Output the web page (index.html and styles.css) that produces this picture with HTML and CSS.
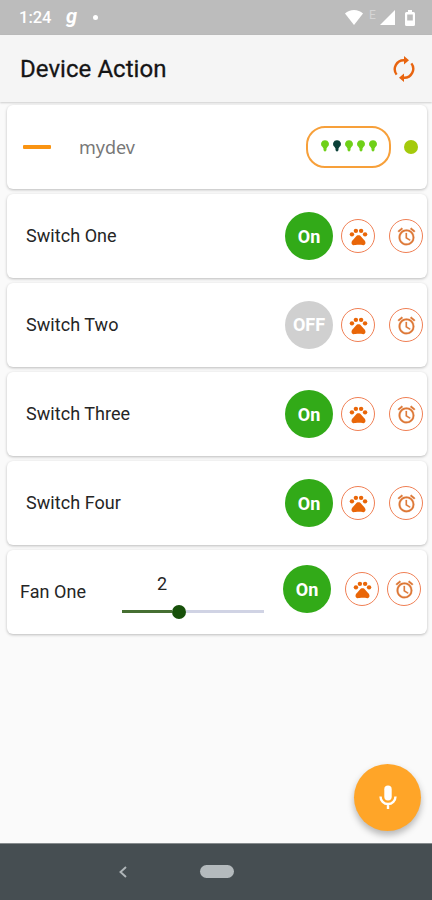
FILE: index.html
```html
<!DOCTYPE html>
<html lang="en">
<head>
<meta charset="utf-8">
<title>Device Action</title>
<link rel="stylesheet" href="styles.css">
</head>
<body>
<svg class="defs" aria-hidden="true">
  <symbol id="paw" viewBox="0 0 24 24">
    <circle cx="4.5" cy="9.5" r="2.5"/><circle cx="9" cy="5.5" r="2.5"/><circle cx="15" cy="5.5" r="2.5"/><circle cx="19.5" cy="9.5" r="2.5"/>
    <path d="M17.34 14.86c-.87-1.02-1.6-1.89-2.48-2.91-.46-.54-1.05-1.08-1.75-1.32-.72-.25-1.5-.25-2.22 0-.7.24-1.28.78-1.75 1.32-.87 1.02-1.6 1.89-2.48 2.91-1.31 1.31-2.92 2.76-2.62 4.79.29 1.02 1.02 2.03 2.33 2.32.73.15 3.06-.44 5.54-.44h.18c2.48 0 4.81.58 5.54.44 1.31-.29 2.04-1.31 2.33-2.32.31-2.04-1.3-3.49-2.62-4.79z"/>
  </symbol>
  <symbol id="alarm" viewBox="0 0 24 24">
    <path d="M22 5.72l-4.6-3.86-1.29 1.53 4.6 3.86L22 5.72zM7.88 3.39L6.6 1.86 2 5.71l1.29 1.53 4.59-3.85zM12.5 8H11v6l4.75 2.85.75-1.23-4-2.37V8zM12 4c-4.97 0-9 4.03-9 9s4.02 9 9 9a9 9 0 0 0 0-18zm0 16c-3.87 0-7-3.13-7-7s3.13-7 7-7 7 3.13 7 7-3.13 7-7 7z"/>
  </symbol>
  <symbol id="bulb" viewBox="0 0 8 12"><path d="M4 0.3a3.7 3.7 0 0 0-2.6 6.500L2.500 8.400v1.900L4 11.700l1.500-1.400V8.400l1.100-1.600A3.7 3.7 0 0 0 4 .3z"/></symbol>
</svg>
<header class="status">
  <span class="time">1:24</span><span class="g">g</span><span class="dot"></span>
  <svg class="wifi" viewBox="0 0 18 15"><path d="M9 15L0 3.6C2.4 1.3 5.5 0 9 0s6.600 1.300 9 3.600z"/></svg>
  <span class="edge">E</span>
  <svg class="signal" viewBox="0 0 15 15"><path d="M15 0v15H0z"/></svg>
  <svg class="battery" viewBox="0 0 10 16"><path d="M3 0h4v2h1.500Q10 2 10 3.500v11Q10 16 8.500 16h-7Q0 16 0 14.500v-11Q0 2 1.500 2H3z"/><path class="level" d="M2.200 4.500h5.600v6H2.200z"/></svg>
</header>
<div class="appbar">
  <h1>Device Action</h1>
  <svg class="refresh" viewBox="0 0 22 26"><g fill="none" stroke="currentColor" stroke-width="2.400"><path d="M3.600 18.600A9 9 0 0 1 11 4.200h2.500"/><path d="M18.400 7.400A9 9 0 0 1 11 21.800H8.500"/></g><path d="M11 0l5 4.300-5 4.200zM11 17.500l-5 4.200 5 4.300z"/></svg>
</div>
<main>
  <section class="card device">
    <span class="dash"></span><span class="name">mydev</span>
    <div class="bulbs"><svg><use href="#bulb"/></svg><svg class="dark"><use href="#bulb"/></svg><svg><use href="#bulb"/></svg><svg><use href="#bulb"/></svg><svg><use href="#bulb"/></svg></div>
    <span class="online"></span>
  </section>
  <section class="card"><span class="label">Switch One</span><span class="toggle">On</span><span class="ring paw"><svg><use href="#paw"/></svg></span><span class="ring alarm"><svg><use href="#alarm"/></svg></span></section>
  <section class="card"><span class="label">Switch Two</span><span class="toggle off">OFF</span><span class="ring paw"><svg><use href="#paw"/></svg></span><span class="ring alarm"><svg><use href="#alarm"/></svg></span></section>
  <section class="card"><span class="label">Switch Three</span><span class="toggle">On</span><span class="ring paw"><svg><use href="#paw"/></svg></span><span class="ring alarm"><svg><use href="#alarm"/></svg></span></section>
  <section class="card"><span class="label">Switch Four</span><span class="toggle">On</span><span class="ring paw"><svg><use href="#paw"/></svg></span><span class="ring alarm"><svg><use href="#alarm"/></svg></span></section>
  <section class="card fan">
    <span class="label">Fan One</span>
    <div class="speed"><span class="value">2</span><div class="track"><span class="fill"></span><span class="thumb"></span><span class="rest"></span></div></div>
    <div class="controls"><span class="toggle">On</span><span class="ring paw"><svg><use href="#paw"/></svg></span><span class="ring alarm"><svg><use href="#alarm"/></svg></span></div>
  </section>
</main>
<div class="fab"><svg viewBox="0 0 18 24"><rect x="5.300" y="0.500" width="7.400" height="15" rx="3.700" fill="#fff"/><path d="M1.500 11.500a7.500 7.500 0 0 0 15 0M9 19v5" fill="none" stroke="#fff" stroke-width="2.400"/></svg></div>
<nav class="navbar">
  <svg class="back" viewBox="0 0 8 12"><path d="M7 1L1.500 6 7 11" fill="none" stroke="#b0b6b9" stroke-width="1.900"/></svg>
  <span class="home"></span>
</nav>
</body>
</html>
```
FILE: styles.css
```css
* { box-sizing: border-box; }
body {
  margin: 0; width: 432px; height: 900px; overflow: hidden;
  display: flex; flex-direction: column;
  background: #fafafa; color: #252525;
  font-family: Roboto, "Liberation Sans", sans-serif;
}
svg { display: block; flex: none; }
.defs { position: absolute; width: 0; height: 0; }
.status {
  height: 35px; flex: none; display: flex; align-items: center;
  padding: 0 17px 0 19px; background: #bcbcbc; color: #fff; fill: #fff;
}
.time { width: 46px; font-size: 16.5px; font-weight: 500; line-height: 20px; }
.g { width: 28px; font-size: 20px; font-weight: 700; font-style: italic; line-height: 20px; padding-left: 1px; margin-top: -4px; }
.dot { width: 5px; height: 5px; border-radius: 50%; background: #fff; }
.wifi { width: 18px; height: 15px; margin-left: auto; }
.edge { width: 17px; padding-left: 6px; font-size: 12px; line-height: 12px; margin-top: -5px; color: #d5d5d5; }
.signal { width: 15px; height: 15px; }
.battery { width: 10px; height: 16px; margin-left: 10px; }
.level { fill: #bcbcbc; }
.appbar {
  height: 67px; flex: none; display: flex; align-items: center; justify-content: space-between;
  padding: 0 17px 0 20px; background: #f5f5f5; box-shadow: 0 1px 2px rgba(0,0,0,.18);
}
h1 { margin: 1px 0 0; font-size: 24px; font-weight: 400; -webkit-text-stroke: .3px #151515; letter-spacing: .05px; line-height: 30px; color: #151515; }
.refresh { width: 22px; height: 26px; color: #e8640f; fill: #e8640f; }
main { display: flex; flex-direction: column; gap: 5px; padding: 3px 5px 0 7px; }
.card {
  height: 84px; display: flex; align-items: center; padding: 0 4px 0 19px;
  background: #fff; border-radius: 6px; box-shadow: 0 1px 3px rgba(0,0,0,.25);
}
.device { padding: 0 9px 0 16px; }
.dash { width: 28px; height: 4px; border-radius: 1px; background: #fa9412; }
.name { margin-left: 28px; font-size: 18px; line-height: 24px; color: #777; font-family: "Noto Sans", sans-serif; }
.bulbs {
  width: 85px; height: 42px; margin-left: auto; border: 2px solid #f7a03a; border-radius: 19px;
  display: flex; align-items: center; justify-content: center; gap: 4px; fill: #6fd018;
  padding: 0 0 2px;
}
.bulbs svg { width: 8px; height: 12px; }
.bulbs .dark { fill: #0b4038; }
.online { width: 14px; height: 14px; margin-left: 13px; border-radius: 50%; background: #a4ca0c; }
.label { font-size: 18px; line-height: 24px; letter-spacing: .05px; margin-top: -1px; }
.toggle {
  width: 48px; height: 48px; margin-left: auto; border-radius: 50%; background: #32aa18;
  color: #fff; font-size: 18px; font-weight: 700; line-height: 50px; text-align: center;
}
.off { background: #d0d0d0; line-height: 48px; }
.ring {
  width: 34px; height: 34px; border: 1.500px solid #f08055; border-radius: 50%;
  display: flex; align-items: center; justify-content: center;
}
.paw { margin-left: 8px; fill: #e96608; }
.alarm { margin-left: 14px; fill: #dd7735; stroke: #dd7735; stroke-width: .3; }
.ring svg { width: 21px; height: 21px; }
.fan { padding: 0 6px 0 13px; }
.fan .label { width: 102px; }
.speed { width: 142px; display: flex; flex-direction: column; }
.value { font-size: 18px; line-height: 22px; text-align: center; padding: 0 62px 0 0; margin-top: 7px; }
.track { display: flex; align-items: center; height: 14px; margin-top: 10px; }
.fill { width: 50px; height: 3px; background: #466f32; }
.thumb { width: 14px; height: 14px; border-radius: 50%; background: #17500a; }
.rest { flex: 1; height: 3px; background: #d0d3e4; }
.controls { display: flex; align-items: center; margin-left: auto; margin-top: -6px; }
.fan .paw { margin-left: 14px; }
.fan .alarm { margin-left: 8px; }
.fab {
  width: 67px; height: 67px; margin: auto 11px 12px auto; border-radius: 50%; flex: none;
  display: flex; align-items: center; justify-content: center; padding-bottom: 2px;
  background: #ffa528; box-shadow: 0 4px 7px rgba(0,0,0,.28);
}
.fab svg { width: 18px; height: 24px; }
.navbar {
  height: 57px; flex: none; display: flex; align-items: center; padding: 0 0 1px 119px;
  background: #464e52; border-top: 1px solid #868b8d;
}
.back { width: 8px; height: 12px; }
.home { width: 34px; height: 13px; margin-left: 73px; border-radius: 7px; background: #b4babd; }
```
